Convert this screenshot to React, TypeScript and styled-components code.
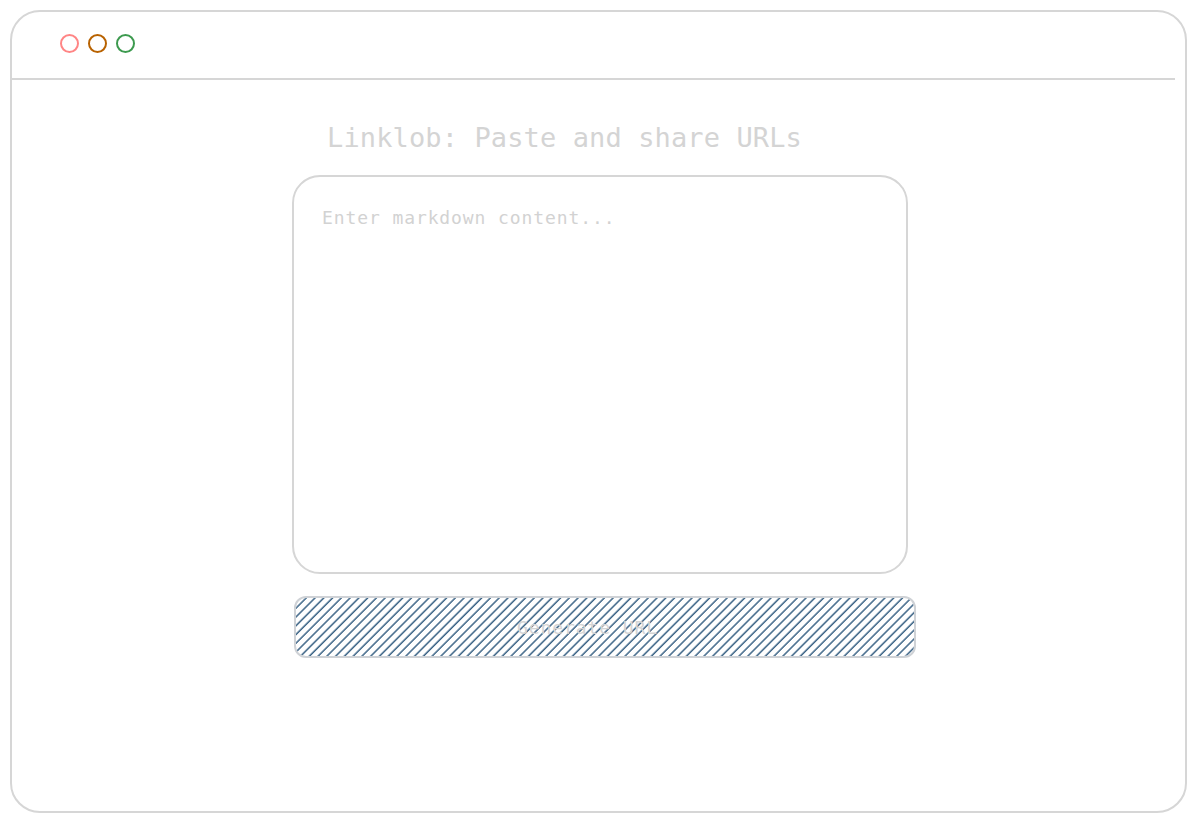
import React from "react";
import styled, { createGlobalStyle } from "styled-components";

const GlobalStyle = createGlobalStyle`
  html, body { margin: 0; padding: 0; background: #ffffff; }
  body { font-family: "DejaVu Sans Mono", "Liberation Mono", monospace; }
  * { box-sizing: border-box; }
`;

const Frame = styled.div`
  margin: 10px;
  width: 1177px;
  height: 803px;
  border: 2px solid #d6d6d6;
  border-radius: 30px;
  background: #fff;
  display: flex;
  flex-direction: column;
  overflow: hidden;
`;

const Header = styled.header`
  height: 66px;
  display: flex;
  align-items: center;
  gap: 9px;
  padding-left: 48px;
  padding-bottom: 4px;
`;

const Separator = styled.div`
  height: 2px;
  margin-right: 10px;
  background: #d6d6d6;
`;

const Dot = styled.span<{ $color: string }>`
  width: 19px;
  height: 19px;
  border-radius: 50%;
  border: 2px solid ${(p) => p.$color};
`;

const Main = styled.main`
  display: flex;
  flex-direction: column;
  align-items: flex-start;
  padding-top: 42px;
`;

const Title = styled.h1`
  margin: 0 0 0 315px;
  font-family: "DejaVu Sans Mono", "Liberation Mono", monospace;
  font-weight: normal;
  font-size: 27px;
  line-height: 32px;
  letter-spacing: 0.12px;
  color: #d4d4d4;
  white-space: nowrap;
`;

const Editor = styled.textarea`
  margin: 21px 0 0 280px;
  width: 616px;
  height: 399px;
  border: 2px solid #d6d6d6;
  border-radius: 28px;
  padding: 31px 28px;
  resize: none;
  outline: none;
  font-family: "DejaVu Sans Mono", "Liberation Mono", monospace;
  font-size: 18px;
  line-height: 20px;
  letter-spacing: 0.9px;
  color: #555;
  background: transparent;
  &::placeholder {
    color: #d2d2d2;
  }
`;

const GenerateButton = styled.button`
  position: relative;
  overflow: hidden;
  margin: 22px 0 0 282px;
  width: 622px;
  height: 62px;
  border: 2px solid #cfd2d6;
  border-radius: 12px;
  background: #fff;
  display: flex;
  align-items: center;
  justify-content: center;
  padding: 0 35px 0 0;
  font-family: "DejaVu Sans Mono", "Liberation Mono", monospace;
  font-size: 18px;
  letter-spacing: 0.9px;
  color: #d4d4d4;
  cursor: pointer;
`;

const Hatch = styled.svg`
  position: absolute;
  inset: 0;
  width: 100%;
  height: 100%;
  pointer-events: none;
`;

const ButtonLabel = styled.span`
  position: relative;
`;

export default function App() {
  return (
    <>
      <GlobalStyle />
      <Frame>
        <Header>
          <Dot $color="#ff8585" />
          <Dot $color="#b86200" />
          <Dot $color="#3d9a4f" />
        </Header>
        <Separator />
        <Main>
          <Title>Linklob: Paste and share URLs</Title>
          <Editor placeholder="Enter markdown content..." />
          <GenerateButton>
            <Hatch aria-hidden="true">
              <defs>
                <pattern
                  id="hatch"
                  width="6.2"
                  height="6.2"
                  patternUnits="userSpaceOnUse"
                  patternTransform="rotate(45)"
                >
                  <line
                    x1="1"
                    y1="-1"
                    x2="1"
                    y2="7.2"
                    stroke="#1c4a72"
                    strokeWidth="1.3"
                  />
                </pattern>
              </defs>
              <rect width="100%" height="100%" fill="url(#hatch)" />
            </Hatch>
            <ButtonLabel>Generate URL</ButtonLabel>
          </GenerateButton>
        </Main>
      </Frame>
    </>
  );
}
